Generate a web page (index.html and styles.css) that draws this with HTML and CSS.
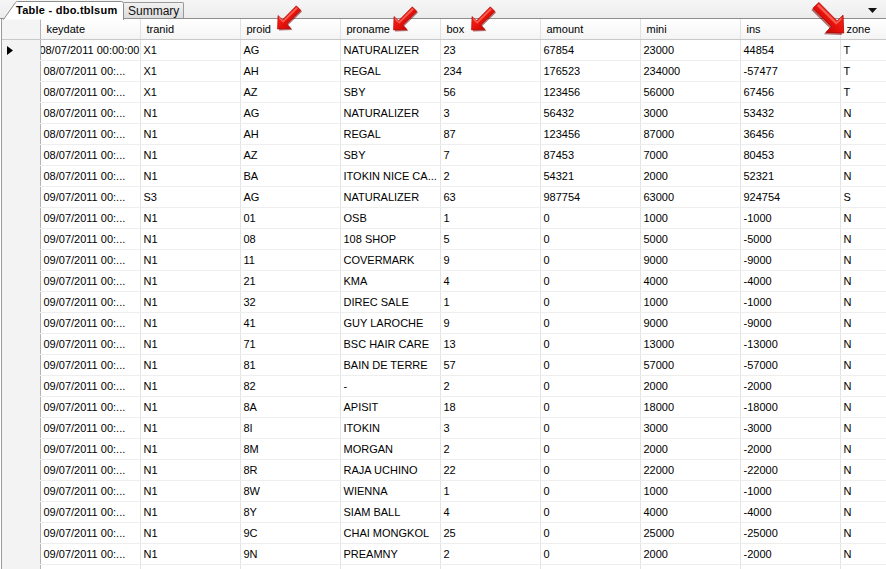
FILE: index.html
```html
<!DOCTYPE html>
<html>
<head>
<meta charset="utf-8">
<link rel="stylesheet" href="styles.css">
</head>
<body>
<div class="window">
  <div class="tabstrip">
    <div class="tab tab-active">
      <svg class="tab-shape" width="121" height="19" viewBox="0 0 121 19"><path d="M0.5 18.5 L12.5 1.5 Q13 0.5 14.5 0.5 L118.5 0.5 Q120.5 0.5 120.5 2.5 L120.5 19" fill="#fff" stroke="#8d8d8d"/></svg>
      <span class="tab-label">Table - dbo.tblsum</span>
    </div>
    <div class="tab tab-inactive"><span class="tab-label">Summary</span></div>
    <div class="tab-fill"></div>
    <svg class="dropdown" width="9" height="5" viewBox="0 0 9 5"><path d="M0 0 H9 L4.5 5 Z" fill="#111"/></svg>
  </div>
  <div class="gridwrap">
    <table class="grid">
      <colgroup>
        <col class="c-sel"><col class="c-data"><col class="c-data"><col class="c-data"><col class="c-data"><col class="c-data"><col class="c-data"><col class="c-data"><col class="c-data"><col class="c-last">
      </colgroup>
      <thead>
        <tr><th class="sel"></th><th>keydate</th><th>tranid</th><th>proid</th><th>proname</th><th>box</th><th>amount</th><th>mini</th><th>ins</th><th>zone</th></tr>
      </thead>
      <tbody>
        <tr><td class="sel"><svg width="6" height="9" viewBox="0 0 6 9" class="cur"><path d="M0 0 L6 4.5 L0 9 Z" fill="#000"/></svg></td><td class="editing"><span>08/07/2011 00:00:00</span></td><td>X1</td><td>AG</td><td>NATURALIZER</td><td>23</td><td>67854</td><td>23000</td><td>44854</td><td>T</td></tr>
        <tr><td class="sel"></td><td>08/07/2011 00:...</td><td>X1</td><td>AH</td><td>REGAL</td><td>234</td><td>176523</td><td>234000</td><td>-57477</td><td>T</td></tr>
        <tr><td class="sel"></td><td>08/07/2011 00:...</td><td>X1</td><td>AZ</td><td>SBY</td><td>56</td><td>123456</td><td>56000</td><td>67456</td><td>T</td></tr>
        <tr><td class="sel"></td><td>08/07/2011 00:...</td><td>N1</td><td>AG</td><td>NATURALIZER</td><td>3</td><td>56432</td><td>3000</td><td>53432</td><td>N</td></tr>
        <tr><td class="sel"></td><td>08/07/2011 00:...</td><td>N1</td><td>AH</td><td>REGAL</td><td>87</td><td>123456</td><td>87000</td><td>36456</td><td>N</td></tr>
        <tr><td class="sel"></td><td>08/07/2011 00:...</td><td>N1</td><td>AZ</td><td>SBY</td><td>7</td><td>87453</td><td>7000</td><td>80453</td><td>N</td></tr>
        <tr><td class="sel"></td><td>08/07/2011 00:...</td><td>N1</td><td>BA</td><td>ITOKIN NICE CA...</td><td>2</td><td>54321</td><td>2000</td><td>52321</td><td>N</td></tr>
        <tr><td class="sel"></td><td>09/07/2011 00:...</td><td>S3</td><td>AG</td><td>NATURALIZER</td><td>63</td><td>987754</td><td>63000</td><td>924754</td><td>S</td></tr>
        <tr><td class="sel"></td><td>09/07/2011 00:...</td><td>N1</td><td>01</td><td>OSB</td><td>1</td><td>0</td><td>1000</td><td>-1000</td><td>N</td></tr>
        <tr><td class="sel"></td><td>09/07/2011 00:...</td><td>N1</td><td>08</td><td>108 SHOP</td><td>5</td><td>0</td><td>5000</td><td>-5000</td><td>N</td></tr>
        <tr><td class="sel"></td><td>09/07/2011 00:...</td><td>N1</td><td>11</td><td>COVERMARK</td><td>9</td><td>0</td><td>9000</td><td>-9000</td><td>N</td></tr>
        <tr><td class="sel"></td><td>09/07/2011 00:...</td><td>N1</td><td>21</td><td>KMA</td><td>4</td><td>0</td><td>4000</td><td>-4000</td><td>N</td></tr>
        <tr><td class="sel"></td><td>09/07/2011 00:...</td><td>N1</td><td>32</td><td>DIREC SALE</td><td>1</td><td>0</td><td>1000</td><td>-1000</td><td>N</td></tr>
        <tr><td class="sel"></td><td>09/07/2011 00:...</td><td>N1</td><td>41</td><td>GUY LAROCHE</td><td>9</td><td>0</td><td>9000</td><td>-9000</td><td>N</td></tr>
        <tr><td class="sel"></td><td>09/07/2011 00:...</td><td>N1</td><td>71</td><td>BSC HAIR CARE</td><td>13</td><td>0</td><td>13000</td><td>-13000</td><td>N</td></tr>
        <tr><td class="sel"></td><td>09/07/2011 00:...</td><td>N1</td><td>81</td><td>BAIN DE TERRE</td><td>57</td><td>0</td><td>57000</td><td>-57000</td><td>N</td></tr>
        <tr><td class="sel"></td><td>09/07/2011 00:...</td><td>N1</td><td>82</td><td>-</td><td>2</td><td>0</td><td>2000</td><td>-2000</td><td>N</td></tr>
        <tr><td class="sel"></td><td>09/07/2011 00:...</td><td>N1</td><td>8A</td><td>APISIT</td><td>18</td><td>0</td><td>18000</td><td>-18000</td><td>N</td></tr>
        <tr><td class="sel"></td><td>09/07/2011 00:...</td><td>N1</td><td>8I</td><td>ITOKIN</td><td>3</td><td>0</td><td>3000</td><td>-3000</td><td>N</td></tr>
        <tr><td class="sel"></td><td>09/07/2011 00:...</td><td>N1</td><td>8M</td><td>MORGAN</td><td>2</td><td>0</td><td>2000</td><td>-2000</td><td>N</td></tr>
        <tr><td class="sel"></td><td>09/07/2011 00:...</td><td>N1</td><td>8R</td><td>RAJA UCHINO</td><td>22</td><td>0</td><td>22000</td><td>-22000</td><td>N</td></tr>
        <tr><td class="sel"></td><td>09/07/2011 00:...</td><td>N1</td><td>8W</td><td>WIENNA</td><td>1</td><td>0</td><td>1000</td><td>-1000</td><td>N</td></tr>
        <tr><td class="sel"></td><td>09/07/2011 00:...</td><td>N1</td><td>8Y</td><td>SIAM BALL</td><td>4</td><td>0</td><td>4000</td><td>-4000</td><td>N</td></tr>
        <tr><td class="sel"></td><td>09/07/2011 00:...</td><td>N1</td><td>9C</td><td>CHAI MONGKOL</td><td>25</td><td>0</td><td>25000</td><td>-25000</td><td>N</td></tr>
        <tr><td class="sel"></td><td>09/07/2011 00:...</td><td>N1</td><td>9N</td><td>PREAMNY</td><td>2</td><td>0</td><td>2000</td><td>-2000</td><td>N</td></tr>
        <tr class="empty"><td class="sel"></td><td></td><td></td><td></td><td></td><td></td><td></td><td></td><td></td><td></td></tr>
      </tbody>
    </table>
  </div>

  <svg class="arrow arrow-proid" width="28" height="28" viewBox="0 0 28 28"><use href="#redarrow"/></svg>
  <svg class="arrow arrow-proname" width="28" height="28" viewBox="0 0 28 28"><use href="#redarrow"/></svg>
  <svg class="arrow arrow-box" width="28" height="28" viewBox="0 0 28 28"><use href="#redarrow"/></svg>
  <svg class="arrow arrow-zone" width="37" height="37" viewBox="0 0 28 28"><use href="#redarrow"/></svg>

  <svg width="0" height="0" class="defs">
    <defs>
      <linearGradient id="ag" x1="0" y1="0" x2="1" y2="1">
        <stop offset="0" stop-color="#ff3a2a"/>
        <stop offset="0.55" stop-color="#e4100a"/>
        <stop offset="1" stop-color="#a80000"/>
      </linearGradient>
      <g id="redarrow">
        <path d="M4 26.5 L4.5 13 L9 17.2 L22.5 3.2 L27 7.6 L13 21.3 L17.5 26 Z" fill="#7a0000" opacity="0.55"/>
        <path d="M2.5 25 L3 11.5 L7.5 15.8 L21.3 1.8 L25.8 6.3 L11.8 20 L16 24.5 Z" fill="url(#ag)" stroke="#b00000" stroke-width="0.6" stroke-linejoin="round"/>
        <path d="M4.2 12.8 L8 16.4 L21.4 3 L22.8 4.4 L8.2 18.8 L4.2 15 Z" fill="#ff8a7a" opacity="0.6"/>
      </g>
    </defs>
  </svg>
</div>
</body>
</html>
```

FILE: styles.css
```css
html, body {
  margin: 0;
  padding: 0;
  background: #ffffff;
}

.window {
  position: relative;
  width: 886px;
  height: 569px;
  overflow: hidden;
  font-family: "Liberation Sans", Arial, sans-serif;
  font-size: 11px;
  color: #000;
  background: #fff;
}

.tabstrip {
  display: flex;
  align-items: flex-end;
  height: 18px;
  padding-left: 3px;
  background: linear-gradient(#f6f6f6, #ececec);
  border-bottom: 1px solid #8e8e8e;
  position: relative;
}

.tab {
  position: relative;
  height: 16px;
  display: flex;
  align-items: center;
  box-sizing: border-box;
}

.tab-active {
  width: 121px;
  height: 18px;
  margin-bottom: -1px;
  z-index: 2;
}

.tab-shape {
  position: absolute;
  left: 0;
  top: 0;
}

.tab-active .tab-label {
  position: relative;
  font-weight: bold;
  font-size: 11px;
  letter-spacing: 0.25px;
  padding-left: 13px;
  padding-top: 0;
  color: #000;
}

.tab-inactive {
  width: 60px;
  height: 16px;
  border: 1px solid #9a9a9a;
  border-bottom: none;
  border-left: none;
  border-radius: 0 2px 0 0;
  background: linear-gradient(#f2f2f2, #dcdcdc);
  padding-left: 4px;
}

.tab-inactive .tab-label {
  font-size: 12px;
  color: #111;
}

.tab-fill {
  flex: 1;
}

.dropdown {
  position: absolute;
  right: 9px;
  top: 8px;
}

.gridwrap {
  border-left: 1px solid #9a9a9a;
  margin-left: 1px;
  height: 550px;
  overflow: hidden;
}

.grid {
  border-collapse: collapse;
  table-layout: fixed;
  width: 884px;
  font-family: "Liberation Sans", Arial, sans-serif;
  font-size: 11px;
}

.c-sel { width: 38px; }
.c-data { width: 100px; }
.c-last { width: 46px; }

.grid th {
  height: 20px;
  padding: 0 0 0 6px;
  text-align: left;
  font-weight: normal;
  background: linear-gradient(#ffffff, #f4f4f4);
  border-right: 1px solid #e2e2e2;
  border-bottom: 1px solid #c8c8c8;
  white-space: nowrap;
  overflow: hidden;
}

.grid th.sel {
  padding: 0;
  background: #f4f4f4;
  border-right: 1px solid #b4b4b4;
}

.grid td {
  height: 20px;
  padding: 0 0 0 3px;
  border-right: 1px solid #e4e4e4;
  border-bottom: 1px solid #eeeeee;
  white-space: nowrap;
  overflow: hidden;
}

.grid td.sel {
  padding: 0;
  background: #f3f3f3;
  border-right: 1px solid #b4b4b4;
  border-bottom: 1px solid #f3f3f3;
}

.cur {
  display: block;
  margin-left: 5px;
}

.grid td.editing {
  padding: 0;
  text-align: right;
  direction: rtl;
}

.grid td.editing span {
  direction: ltr;
  unicode-bidi: embed;
}

.arrow {
  position: absolute;
}

.arrow-proid { left: 275px; top: 4px; }
.arrow-proname { left: 391px; top: 5px; }
.arrow-box { left: 469px; top: 5px; }
.arrow-zone { left: 810px; top: 0px; transform: scaleX(-1); }

.defs {
  position: absolute;
}
```
